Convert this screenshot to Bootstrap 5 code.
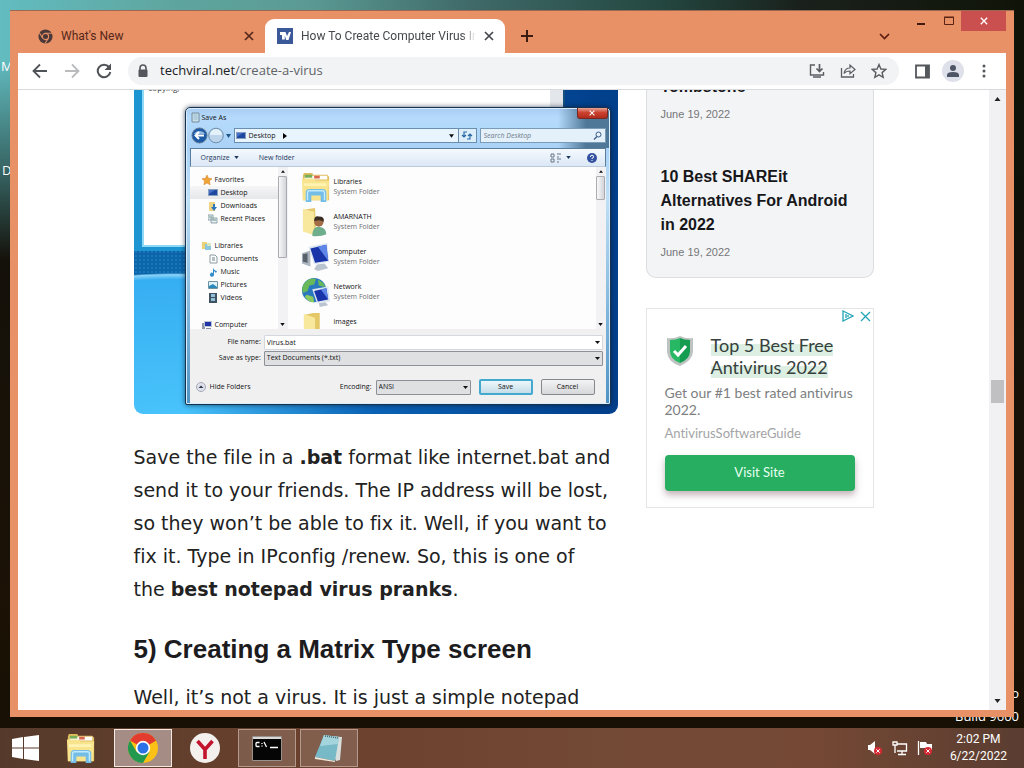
<!DOCTYPE html>
<html lang="en">
<head>
<meta charset="utf-8">
<meta name="viewport" content="width=device-width, initial-scale=1">
<title>How To Create Computer Virus</title>
<link href="https://cdn.jsdelivr.net/npm/bootstrap@5.3.0/dist/css/bootstrap.min.css" rel="stylesheet">
<style>
  body { height: 100vh; font-family: "Open Sans", "Noto Sans", sans-serif; color: #222; overflow: hidden; font-variant-ligatures: none;
    background: linear-gradient(180deg, transparent 0, transparent 60px, rgba(12,14,8,.55) 180px, #14110a 260px, #1c1206 600px, #150f02 100%),
      linear-gradient(90deg, #62bcc0 0, #5fa6a0 16%, #5b9a94 30%, #3f6a69 46%, #23463f 65%, #1a211c 78%, #101408 100%); }
  svg { display: block; flex: none; }
  button { font: inherit; color: inherit; background: none; border: 0; padding: 0; }
  .desk { min-height: 0; padding: 10px 10px 11px; }
  .desk-label { position: absolute; color: #fff; font-size: 13px; line-height: 18px; }
  .lbl-a { left: 1px; top: 57px; } .lbl-b { left: 2px; top: 161px; }
  .lbl-c { right: 5px; bottom: 0; line-height: 23px; }
  .win { position: relative; min-width: 0; background: #e89066; padding: 0 8px 7px; border-top: 1px solid #9c6851; }

  .titlebar { height: 42px; flex: none; font-size: 12px; }
  .tabs { padding-top: 8px; }
  .tab { height: 34px; padding: 0 11px 0 12px; font-family: Roboto, sans-serif; font-size: 12px; color: #54281a; }
  .tab-idle { width: 247px; padding-left: 20px; }
  .tab-on { width: 240px; background: #fff; border-radius: 9px 9px 0 0; color: #45474c; position: relative; }
  .tab-text { white-space: nowrap; overflow: hidden; }
  .tab-on .tab-text { -webkit-mask-image: linear-gradient(90deg, #000 92%, transparent); mask-image: linear-gradient(90deg, #000 92%, transparent); }
  .plus { padding: 15px 0 0 16px; }
  .winbtn { width: 27px; height: 20px; }
  .winclose { width: 45px; height: 20px; background: #c9504f; }
  .chev { padding: 20px 13px 0 0; }

  .toolbar { height: 37px; flex: none; background: #fff; padding: 0 14px; border-bottom: 1px solid #d9dadd; gap: 12px; }
  .omni { height: 28px; background: #f1f3f4; border-radius: 14px; padding: 0 8px 0 9px; gap: 11px; }
  .url { font-size: 13px; color: #5f6368; }
  .url b { font-weight: 400; color: #202124; }
  .avatar { width: 22px; height: 22px; background: #dfe1ea; border-radius: 50%; }

  .view { min-height: 0; background: #fff; overflow: hidden; }
  .vbar { width: 17px; background: #f1f1f3; padding: 7px 0; }
  .vbar i { width: 13px; height: 23px; background: #c0c0c2; margin-top: 279px; }
  .page { max-width: 740px; gap: 28px; }
  .article { min-width: 0; }
  .article p { font: 19px/33px Verdana, "DejaVu Sans", sans-serif; font-variant-ligatures: none; margin: 0 0 25px; color: #222; }
  .article h2 { font: bold 26px/36px "Liberation Sans", Arial, sans-serif; margin: 0 0 14px; color: #1c1c1e; }
  .side { width: 228px; flex: none; }
  .posts { display: flow-root; height: 188px; background: #f3f4f6; border: 1px solid #dcdde0; border-top: 0; border-radius: 0 0 10px 10px; padding: 0 14px; font-family: "Liberation Sans", Arial, sans-serif; }
  .posts h3 { font-size: 16px; line-height: 24px; font-weight: 700; color: #17171a; margin: 0; }
  .posts time { display: block; font-size: 11px; line-height: 16px; color: #757678; margin-top: 7px; }
  .posts .cutoff { margin-top: -15px; }
  .posts .nextpost { margin-top: 43px; }

  .adbox { margin-top: 30px; height: 200px; border: 1px solid #e6e6e8; padding: 25px 18px 0; position: relative; font-family: Lato, sans-serif; }
  .adtop { position: absolute; right: 2px; top: 1px; gap: 5px; }
  .adbox h4 { font-size: 18px; line-height: 22px; color: #36403c; margin: 0; font-weight: 400; }
  .adbox h4 span { background: linear-gradient(transparent 45%, #dcefe2 45%); }
  .adbox p { font-size: 14px; line-height: 17px; color: #7c7e80; margin: 6px 0 7px; }
  .adbox small { font-size: 13px; line-height: 16px; color: #a3a4a6; display: block; }
  .visit { display: block; margin-top: 14px; height: 36px; line-height: 35px; background: #27ae60; color: #e6fff0; border-radius: 4px; text-align: center; font-size: 13px; text-decoration: none; box-shadow: 0 4px 7px #8f6f7a88; }

  /* the screenshot that illustrates the article */
  .shot { position: relative; height: 324px; border-radius: 0 0 9px 9px; overflow: hidden; padding: 17px 7px 9px 51px; margin-bottom: 27px;
    background: linear-gradient(90deg, transparent 50px, #0a62b5 240px, #02408c 460px),
      radial-gradient(ellipse 300px 160px at 40px 343px, #4cc6fc 0, #36aef2 96%, #8bd4f8 99%, transparent 100%),
      radial-gradient(circle, #3aa6d8 0, transparent 1px) 0 0 / 4px 4px,
      linear-gradient(180deg, #1b8fce 0, #1a86c8 120px, #0d62a8 140px, #0a70b4 100%); }
  .note { position: absolute; left: 0; top: 0; width: 431px; height: 161px; background: linear-gradient(90deg, #fff 408px, #e3e6ea 408px); border: solid #1c95d2; border-width: 0 2px 4px 8px; border-right-color: #16507e; box-shadow: inset 2px -2px #8edaf6; font-size: 8px; line-height: 8px; padding-left: 7px; overflow: hidden; }
  .note span { display: block; margin-top: -6px; color: #333; }
  .dlg { position: relative; height: 298px; border: 1px solid #16324e; border-radius: 5px 5px 2px 2px; padding: 0 4px 4px; font-size: 7px; line-height: 10px; color: #111;
    background: linear-gradient(90deg, transparent 372px, #4f7898 400px) 0 0 / 100% 40px no-repeat, linear-gradient(180deg, #a9cdf2 0, #b5dafc 10px, #aad2f6 40px, #bfe0f6 90px, #4f93c4 100%); box-shadow: 0 0 5px #0a1a2eb0, inset 0 0 0 1px #d8eeff; }
  .dlg-top { height: 19px; padding: 0 0 0 1px; gap: 2px; }
  .dlg-x { width: 31px; height: 11px; background: linear-gradient(#e8a596, #cb4330 45%, #b12b1c); border: 1px solid #742a22; border-top: 0; border-radius: 0 0 3px 3px; margin: 0 -2px 8px 0; }
  .dlg-nav { height: 21px; padding: 0 0 4px 1px; gap: 2px; }
  .dlg-addr { height: 15px; background: #e9f5fe; border: 1px solid #6b8eae; padding: 0 4px 0 1px; gap: 3px; }
  .refresh { width: 18px; height: 15px; background: #ddeefb; border: 1px solid #6b8eae; border-left: 0; margin-left: -2px; }
  .dlg-search { width: 126px; height: 15px; background: #e4f0fa; border: 1px solid #7a9cb8; padding: 0 3px; margin-left: 1px; }
  .dlg-search input { border: 0; background: none; font-size: 7px; font-style: italic; width: 100px; padding: 0; line-height: 10px; }
  .dlg-search input::placeholder { color: #6c7a88; }
  .dlg-tools { height: 19px; background: linear-gradient(#f4f9fe, #dce8f6); border: 1px solid #5c7c9c; border-bottom-color: #bccbdc; padding: 0 8px 0 10px; color: #1e395b; }
  .dlg-body { height: 162px; background: #fdfdfe; overflow: hidden; }
  .tree { width: 88px; padding: 6px 0 0; }
  .tree li { height: 13px; padding-left: 12px; gap: 3px; white-space: nowrap; }
  .tree li.sub { padding-left: 18px; }
  .tree li.now { background: linear-gradient(#f6f6f7, #e6e7ea); }
  .tree li.apart { margin-top: 14px; }
  .bar { width: 10px; background: #f2f2f4; padding: 3px 0; }
  .thumb { width: 9px; border: 1px solid #a9abb0; border-radius: 1px; background: linear-gradient(90deg, #f8f8f9, #d2d4d8); margin: 3px 0 auto; }
  .thumb-l { height: 82px; } .thumb-r { height: 24px; }
  .items { padding: 5px 0 0 13px; }
  .items li { height: 35px; gap: 3px; }
  .items span { display: block; padding-top: 5px; }
  .items em { font-style: normal; display: block; color: #6d6d70; }
  .dlg-foot { height: 74px; background: #f0f0f1; padding: 5px 3px 0 6px; }
  .frow { height: 16px; gap: 3px; }
  .frow label { width: 79px; text-align: right; }
  .fbtn { margin-top: 13px; height: 16px; }
  .dlg .ctl { font-size: 7px; line-height: 10px; height: 15px; min-height: 0; border: 1px solid #8d9096; border-radius: 1px; padding: 0 10px 0 2px; color: #111; box-shadow: none;
    background: #fff url("data:image/svg+xml,%3Csvg xmlns='http://www.w3.org/2000/svg' width='5' height='3'%3E%3Cpath d='M0 0h5L2.5 3z' fill='%23111'/%3E%3C/svg%3E") no-repeat right 2px center / 5px 3px; }
  .dlg .ctl.grey { background-color: #dfe0e2; }
  .dlg .ctl.white { border-color: #d4d8de; }
  .dlg .enc { width: 95px; }
  .push { width: 54px; height: 16px; border: 1px solid #85888c; border-radius: 2px; background: linear-gradient(#f4f4f5, #d6d7da); text-align: center; }
  .push-on { border: 2px solid #44a9cf; background: linear-gradient(#edf7fb, #c5dde8); margin: 0 8px; }

  .taskbar { height: 40px; flex: none; background: linear-gradient(90deg, #553a2b 0, #6b412d 30%, #734a36 60%, #744834 80%, #5a3d31 100%); color: #fff; padding-right: 17px; }
  .task { width: 58px; height: 38px; border: 1px solid transparent; margin-right: 4px; }
  .task-start { width: 50px; height: 38px; margin-right: 2px; }
  .task.open { background: #ffffff26; border-color: #b49a8e; }
  .task.active { background: #a58c84; border-color: #f4e8e2; }
  .tray { gap: 9px; }
  .clock { font: 12px/17px Roboto, sans-serif; margin-left: 8px; text-align: center; }
</style>
</head>
<body class="d-flex flex-column">
<svg width="0" height="0" class="position-absolute">
  <symbol id="x" viewBox="0 0 10 10"><path d="M1 1l8 8M9 1L1 9" stroke="currentColor" stroke-width="1.7"/></symbol>
  <symbol id="dn" viewBox="0 0 6 4"><path d="M0 0h6L3 4z" fill="currentColor"/></symbol>
  <symbol id="up" viewBox="0 0 6 4"><path d="M0 4h6L3 0z" fill="currentColor"/></symbol>
  <symbol id="folders" viewBox="0 0 32 32"><path d="M2 4l1-3h9l1 2h15l2 2v25H2z" fill="#e2bd5c"/><path d="M4 4h24v4H4z" fill="#fff"/><path d="M4 3h8v3H4z" fill="#79ae58"/><path d="M14 4h6v3h-6z" fill="#d9664c"/><path d="M1 7h12l2 2h15l-1 21H2z" fill="#f9e48e"/><path d="M3 12h24v3H3z" fill="#fff3b4"/><path d="M5 32V22q0-4 4-4h14q4 0 4 4v10h-6v-7H11v7z" fill="#74bde6"/><path d="M7 30v-8q0-2 2-2h14q2 0 2 2v8" fill="none" stroke="#c1ebfc" stroke-width="1.5"/></symbol>
  <symbol id="user" viewBox="0 0 32 32"><path d="M3 3l12-2 1 28-12-3z" fill="#e4c867"/><path d="M2 2l12 3v25L2 26z" fill="#f8e89e"/><circle cx="19" cy="16" r="5" fill="#a36e47"/><path d="M14 15q0-6 5-5 7 0 5 6-2-3-10-1z" fill="#3b2c22"/><path d="M12 31q0-10 7-10 8 1 8 8-6 3-15 2z" fill="#6eae8d"/></symbol>
  <symbol id="pc" viewBox="0 0 32 32"><path d="M1 12l9-3v17l-9-3z" fill="#abb5c0"/><path d="M2 13l5-1v10l-5-1z" fill="#59616d"/><path d="M8 5l20-4 2 20-16 3z" fill="#dce6f2"/><path d="M10 7l17-4 2 17-14 2z" fill="#1834a8"/><path d="M18 5l9-2 2 17z" fill="#5e86e8"/><path d="M17 24l8-1 4 5-11 3-4-2z" fill="#bac4cf"/></symbol>
  <symbol id="net" viewBox="0 0 32 32"><circle cx="14" cy="14" r="13" fill="#2a79bf"/><path d="M4 6q6-6 12-4l-2 6-5 1-2 6-5 2q-2-6 2-11zM18 3q6 2 8 8l-7-2z" fill="#69b85a"/><path d="M6 19l7 2 1 6q-6 0-10-6z" fill="#8aca5e"/><path d="M12 13l17-3 2 16-14 2z" fill="#dce6f2"/><path d="M14 15l13-3 2 12-11 2z" fill="#1834a8"/><path d="M21 13l6-1 2 12z" fill="#5e86e8"/><path d="M19 28l7-1 3 3-9 2z" fill="#bac4cf"/></symbol>
  <symbol id="fold" viewBox="0 0 32 32"><path d="M4 3l9-2h7v30H4z" fill="#e4c867"/><path d="M3 2l12 4v25H3z" fill="#f8e89e"/></symbol>
  <symbol id="mon" viewBox="0 0 10 10"><path d="M0 1h10v7H0z" fill="#8a9fc0"/><path d="M1 2h8v5H1z" fill="#1e48a0"/><path d="M1 2h6L1 6z" fill="#446fc4"/></symbol>
  <symbol id="help" viewBox="0 0 10 10"><circle cx="5" cy="5" r="5" fill="#3450a0"/><path d="M3.400 4Q3.400 2.200 5 2.200T6.600 3.800Q6.600 5 5 5.300V6M5 7v1" stroke="#fff" fill="none"/></symbol>
</svg>

<div class="desk flex-grow-1 d-flex position-relative">
  <span class="desk-label lbl-a">M</span><span class="desk-label lbl-b">D</span>
  <span class="desk-label lbl-c text-end">Windows 8.1 Pro<br>Build 9600</span>

  <section class="win flex-grow-1 d-flex flex-column">
    <header class="titlebar d-flex align-items-start">
      <div class="tabs d-flex">
        <div class="tab tab-idle d-flex align-items-center">
          <svg width="15" height="15" viewBox="0 0 16 16"><circle cx="8" cy="8" r="7.500" fill="#4a3938"/><circle cx="8" cy="8" r="3.300" fill="#4a3938" stroke="#e89066" stroke-width="1.200"/><path d="M8 4.500h7M5 9.800L1.500 3.900M11 9.800L7.500 15.500" stroke="#e89066" stroke-width="1.100"/></svg>
          <span class="tab-text flex-grow-1 ps-2">What's New</span>
          <button aria-label="Close tab"><svg width="10" height="10"><use href="#x"/></svg></button>
        </div>
        <div class="tab tab-on d-flex align-items-center">
          <svg width="16" height="16" viewBox="0 0 16 16"><path d="M0 0h16v16H0z" fill="#3b5998"/><path d="M3 4h5.500l1.500 4L12 4h2l-2.500 8H9.200L7.800 7.500v4H5V7H3z" fill="#fff"/></svg>
          <span class="tab-text flex-grow-1 ps-2 me-2">How To Create Computer Virus In</span>
          <button aria-label="Close tab"><svg width="10" height="10"><use href="#x"/></svg></button>
        </div>
      </div>
      <button class="plus" aria-label="New tab"><svg width="12" height="20" viewBox="0 0 12 20"><path d="M6 4v12M0 10h12" stroke="#3a1d10" stroke-width="2"/></svg></button>
      <button class="chev ms-auto" aria-label="Search tabs"><svg width="11" height="10" viewBox="0 0 11 10"><path d="M1 3l4.500 4.500L10 3" fill="none" stroke="#5a1f10" stroke-width="1.700"/></svg></button>
      <button class="winbtn ms-1" aria-label="Minimize"><svg width="27" height="20"><path d="M10 13h8" stroke="#451a0e" stroke-width="2"/></svg></button>
      <button class="winbtn" aria-label="Maximize"><svg width="27" height="20"><path d="M10.500 6.500h9v7h-9zM10 6h10" fill="none" stroke="#5a2213"/></svg></button>
      <button class="winclose d-flex align-items-center justify-content-center text-white" aria-label="Close"><svg width="8" height="8"><use href="#x"/></svg></button>
    </header>

    <nav class="toolbar d-flex align-items-center">
      <button aria-label="Back"><svg width="16" height="16" viewBox="0 0 16 16"><path d="M15 8H2M8 1.500L1.500 8 8 14.500" fill="none" stroke="#505357" stroke-width="1.800"/></svg></button>
      <button class="ms-1" aria-label="Forward"><svg width="16" height="16" viewBox="0 0 16 16"><path d="M1 8h13M8 1.500L14.500 8 8 14.500" fill="none" stroke="#b9bbbd" stroke-width="1.800"/></svg></button>
      <button class="ms-1" aria-label="Reload"><svg width="16" height="16" viewBox="0 0 16 16"><path d="M13 4A6.300 6.300 0 1 0 14.300 9" fill="none" stroke="#505357" stroke-width="2"/><path d="M15 .5V7H8.500z" fill="#505357"/></svg></button>
      <div class="omni flex-grow-1 d-flex align-items-center ms-1 me-1">
        <svg width="12" height="14" viewBox="0 0 12 14"><path d="M3 6V4a3 3 0 0 1 6 0v2" fill="none" stroke="#54575b" stroke-width="1.600"/><rect x="1.500" y="5.500" width="9" height="7.500" rx="1" fill="#54575b"/></svg>
        <span class="url flex-grow-1"><b>techviral.net</b>/create-a-virus</span>
        <button aria-label="Install"><svg width="16" height="16" viewBox="0 0 16 16"><path d="M6 2H1.500v10h13V9" fill="none" stroke="#5a5d61" stroke-width="1.400"/><path d="M10.500 1v7M7.500 5.500l3 3 3-3M4 14h8" fill="none" stroke="#5a5d61" stroke-width="1.700"/></svg></button>
        <button class="ms-1" aria-label="Share"><svg width="16" height="16" viewBox="0 0 16 16"><path d="M1.500 5v9h12v-3" fill="none" stroke="#5a5d61" stroke-width="1.300"/><path d="M4 10.500Q5 5 10 5V2l5 4.500-5 4.300V8Q6 8 4 10.500z" fill="none" stroke="#5a5d61" stroke-width="1.200"/></svg></button>
        <button class="ms-1 me-1" aria-label="Bookmark"><svg width="16" height="16" viewBox="0 0 16 16"><path d="M8 1.500l1.900 4.500 4.900.4-3.700 3.200 1.100 4.800L8 11.900l-4.200 2.500 1.100-4.800L1.200 6.400 6.100 6z" fill="none" stroke="#5a5d61" stroke-width="1.400"/></svg></button>
      </div>
      <button aria-label="Side panel"><svg width="15" height="15" viewBox="0 0 15 15"><path d="M1 1.500h13v12H1z" fill="none" stroke="#54575b" stroke-width="1.800"/><path d="M10 1h4v13h-4z" fill="#54575b"/></svg></button>
      <button class="avatar d-flex align-items-center justify-content-center" aria-label="Profile"><svg width="14" height="14" viewBox="0 0 14 14"><circle cx="7" cy="4" r="3" fill="#4e5565"/><path d="M1 13v-2q0-3 6-3t6 3v2z" fill="#4e5565"/></svg></button>
      <button aria-label="Menu"><svg width="16" height="16" viewBox="0 0 16 16" fill="#54575b"><circle cx="8" cy="3" r="1.500"/><circle cx="8" cy="8" r="1.500"/><circle cx="8" cy="13" r="1.500"/></svg></button>
    </nav>

    <div class="view flex-grow-1 d-flex">
      <div class="flex-grow-1 d-flex justify-content-center overflow-hidden">
        <main class="page flex-grow-1 d-flex">
          <article class="article flex-grow-1">
            <div class="shot">
              <div class="note"><span>copying,</span></div>
              <div class="dlg">
                <div class="dlg-top d-flex align-items-center">
                  <svg width="9" height="11" viewBox="0 0 9 11"><path d="M1 1h7v9H1z" fill="#c8e1ed" stroke="#72899b"/><path d="M2.500 3h4M2.500 5h4M2.500 7h4" stroke="#7e9fb2" stroke-width=".6"/></svg>
                  <span class="flex-grow-1">Save As</span>
                  <button class="dlg-x d-flex align-items-center justify-content-center text-white" aria-label="Close"><svg width="6" height="6"><use href="#x"/></svg></button>
                </div>
                <div class="dlg-nav d-flex align-items-center">
                  <svg width="41" height="17" viewBox="0 0 41 17"><circle cx="8.500" cy="8.500" r="7.500" fill="#1e5ba7" stroke="#5f7995"/><path d="M3 7a6 5 0 0 1 11 0z" fill="#91b7df"/><path d="M4 8.500h9M8 5L4.500 8.500 8 12" stroke="#fff" stroke-width="2" fill="none"/><circle cx="25" cy="8.500" r="7.300" fill="#bdd5ea" stroke="#6d8caa"/><path d="M19 8a6 6 0 0 1 12 0z" fill="#e3f1fb"/><path d="M35 7h5l-2.500 4z" fill="#1d5689"/></svg>
                  <div class="dlg-addr flex-grow-1 d-flex align-items-center"><svg width="10" height="10"><use href="#mon"/></svg><span>Desktop</span><svg class="ms-1" width="4" height="6" viewBox="0 0 4 6"><path d="M0 0v6l4-3z"/></svg><svg class="ms-auto" width="5" height="4"><use href="#dn"/></svg></div>
                  <button class="refresh" aria-label="Refresh"><svg width="16" height="13" viewBox="0 0 16 13"><path d="M8 3H5v5M3 6l2 2 2-2M8 10h3V5M9 7l2-2 2 2" fill="none" stroke="#2c68a6" stroke-width="1.200"/></svg></button>
                  <div class="dlg-search d-flex align-items-center justify-content-between"><input type="search" placeholder="Search Desktop" aria-label="Search Desktop"><svg width="9" height="9" viewBox="0 0 9 9"><circle cx="5.500" cy="3.500" r="2.500" fill="none" stroke="#3d5c82"/><path d="M4 5.500L1 8.500" stroke="#3d5c82" stroke-width="1.300"/></svg></div>
                </div>
                <div class="dlg-tools d-flex align-items-center">
                  <button class="d-flex align-items-center gap-1">Organize <svg width="5" height="3"><use href="#dn"/></svg></button>
                  <button class="ms-3 ps-1">New folder</button>
                  <svg class="ms-auto" width="12" height="10" viewBox="0 0 12 10"><path d="M1 1h3v3H1zM1 6h3v3H1zM7 1h4M7 4h2M7 6h4M7 9h2" fill="none" stroke="#6b7889"/></svg>
                  <svg class="ms-1" width="5" height="3"><use href="#dn"/></svg>
                  <svg class="ms-3" width="10" height="10"><use href="#help"/></svg>
                </div>
                <div class="dlg-body d-flex">
                  <ul class="tree list-unstyled m-0">
                    <li class="d-flex align-items-center"><svg width="10" height="10" viewBox="0 0 10 10"><path d="M5 0l1.500 3.300 3.500.4-2.600 2.400.7 3.700L5 8 1.900 9.800l.7-3.700L0 3.700l3.500-.4z" fill="#f0a336" stroke="#d07c1c" stroke-width=".5"/></svg>Favorites</li>
                    <li class="sub now d-flex align-items-center"><svg width="10" height="10"><use href="#mon"/></svg>Desktop</li>
                    <li class="sub d-flex align-items-center"><svg width="10" height="10" viewBox="0 0 10 10"><path d="M1 1h6v9H1z" fill="#efd582"/><path d="M7 3v3h2L6 10 3 6h2V3z" fill="#2e76be"/></svg>Downloads</li>
                    <li class="sub d-flex align-items-center"><svg width="10" height="10" viewBox="0 0 10 10"><path d="M0 1h5v5H0zM3 4h6v5H3z" fill="#e5edf2" stroke="#8fa4ac"/><path d="M1 3h3M5 6h3" stroke="#749a80"/></svg>Recent Places</li>
                    <li class="apart d-flex align-items-center"><svg width="10" height="10" viewBox="0 0 10 10"><path d="M0 1h5v7H0z" fill="#edd177"/><path d="M3 3h6v6H3z" fill="#8ac6dc"/><path d="M5 2h4v3H5z" fill="#d9e7bd"/></svg>Libraries</li>
                    <li class="sub d-flex align-items-center"><svg width="10" height="10" viewBox="0 0 10 10"><path d="M2 1h5l2 2v6H2z" fill="#fff" stroke="#899a9e"/><path d="M4 4h3M4 6h3" stroke="#67808d"/></svg>Documents</li>
                    <li class="sub d-flex align-items-center"><svg width="10" height="10" viewBox="0 0 10 10"><path d="M5 0q0 3 4 4L8 6 6 4v4a2 2 0 1 1-1-2z" fill="#318dcc"/></svg>Music</li>
                    <li class="sub d-flex align-items-center"><svg width="10" height="10" viewBox="0 0 10 10"><path d="M.5 1.500h9v7h-9z" fill="#ddf1fa" stroke="#70919e"/><path d="M1 6l4-2 4 3v1H1z" fill="#278abb"/></svg>Pictures</li>
                    <li class="sub d-flex align-items-center"><svg width="10" height="10" viewBox="0 0 10 10"><path d="M1 0h8v10H1z" fill="#3e5262"/><path d="M3 1h4v3H3zM3 5h4v3H3z" fill="#91c0d8"/></svg>Videos</li>
                    <li class="apart d-flex align-items-center"><svg width="10" height="10" viewBox="0 0 10 10"><path d="M0 3h3v6H0z" fill="#8d98a8"/><path d="M2 1h8v6H2z" fill="#bac7d8"/><path d="M3 2h6v4H3z" fill="#2234a5"/><path d="M4 8h5v1H4z" fill="#8993a0"/></svg>Computer</li>
                  </ul>
                  <div class="bar d-flex flex-column align-items-center"><svg width="4" height="3"><use href="#up"/></svg><i class="thumb thumb-l"></i><svg width="5" height="3"><use href="#dn"/></svg></div>
                  <ul class="items list-unstyled flex-grow-1 m-0">
                    <li class="d-flex"><svg width="30" height="30"><use href="#folders"/></svg><span>Libraries<em>System Folder</em></span></li>
                    <li class="d-flex"><svg width="30" height="30"><use href="#user"/></svg><span>AMARNATH<em>System Folder</em></span></li>
                    <li class="d-flex"><svg width="30" height="30"><use href="#pc"/></svg><span>Computer<em>System Folder</em></span></li>
                    <li class="d-flex"><svg width="30" height="30"><use href="#net"/></svg><span>Network<em>System Folder</em></span></li>
                    <li class="d-flex"><svg width="30" height="30"><use href="#fold"/></svg><span>images</span></li>
                  </ul>
                  <div class="bar d-flex flex-column align-items-center"><svg width="4" height="3"><use href="#up"/></svg><i class="thumb thumb-r"></i><svg width="5" height="3"><use href="#dn"/></svg></div>
                </div>
                <div class="dlg-foot">
                  <div class="frow d-flex align-items-center"><label for="fn">File name:</label><input id="fn" class="ctl white form-control flex-grow-1" value="Virus.bat"></div>
                  <div class="frow d-flex align-items-center"><label for="ft">Save as type:</label><select id="ft" class="ctl grey form-select flex-grow-1"><option>Text Documents (*.txt)</option></select></div>
                  <div class="fbtn d-flex align-items-center">
                    <button class="d-flex align-items-center gap-1"><svg width="10" height="10" viewBox="0 0 10 10"><circle cx="5" cy="5" r="4.500" fill="#dfe2ea" stroke="#a5a9b5"/><path d="M2.500 6h5L5 3.500z" fill="#333a50"/></svg>Hide Folders</button>
                    <label class="ms-auto me-1" for="en">Encoding:</label><select id="en" class="ctl grey enc form-select"><option>ANSI</option></select>
                    <button class="push push-on">Save</button><button class="push me-2">Cancel</button>
                  </div>
                </div>
              </div>
            </div>
            <p>Save the file in a <strong>.bat</strong> format like internet.bat and send it to your friends. The IP address will be lost, so they won’t be able to fix it. Well, if you want to fix it. Type in IPconfig /renew. So, this is one of<br>the <strong>best notepad virus pranks</strong>.</p>
            <h2>5) Creating a Matrix Type screen</h2>
            <p>Well, it’s not a virus. It is just a simple notepad</p>
          </article>

          <aside class="side">
            <div class="posts">
              <h3 class="cutoff">Tombstone</h3>
              <time>June 19, 2022</time>
              <h3 class="nextpost">10 Best SHAREit Alternatives For Android in 2022</h3>
              <time>June 19, 2022</time>
            </div>
            <div class="adbox">
              <div class="adtop d-flex"><svg width="12" height="12" viewBox="0 0 12 12"><path d="M1 1l10 5-10 5zM4 4v4M6 5v2" fill="none" stroke="#22a5b5" stroke-width="1.300"/></svg><button aria-label="Close ad"><svg width="12" height="12" viewBox="0 0 12 12"><path d="M2 2l9 9M11 2l-9 9" stroke="#22a5b5" stroke-width="1.300"/></svg></button></div>
              <div class="d-flex">
                <svg class="me-3" width="30" height="34" viewBox="0 0 30 34"><path d="M2 4q7 1 13-2 6 3 13 2v14q-1 9-13 14Q3 28 2 18z" fill="#bcc3c1"/><path d="M5 6q6 0 10-2v25Q5 25 5 17z" fill="#27b864"/><path d="M15 4q4 2 10 2v11q0 8-10 12z" fill="#149c50"/><path d="M9 17l4 4 8-9" fill="none" stroke="#fff" stroke-width="3"/></svg>
                <h4><span>Top 5 Best Free<br>Antivirus 2022</span></h4>
              </div>
              <p>Get our #1 best rated antivirus 2022.</p>
              <small>AntivirusSoftwareGuide</small>
              <a class="visit" href="#">Visit Site</a>
            </div>
          </aside>
        </main>
      </div>
      <div class="vbar d-flex flex-column align-items-center"><svg width="7" height="4"><use href="#up"/></svg><i></i><svg class="mt-auto" width="7" height="4"><use href="#dn"/></svg></div>
    </div>
  </section>
</div>

<footer class="taskbar d-flex align-items-center">
  <button class="task-start d-flex align-items-center justify-content-center" aria-label="Start"><svg width="27" height="26" viewBox="0 0 27 26" fill="#fff"><path d="M0 4l11-2v10.500H0zM12 2l15-2v12.500H12zM0 13.500h11V24L0 22zM12 13.500h15V26l-15-2z"/></svg></button>
  <button class="task d-flex align-items-center justify-content-center" aria-label="File Explorer"><svg width="32" height="30"><use href="#folders" width="32" height="30"/></svg></button>
  <button class="task active d-flex align-items-center justify-content-center" aria-label="Chrome"><svg width="30" height="30" viewBox="0 0 30 30"><circle cx="15" cy="15" r="15" fill="#fbc116"/><path d="M15 15L2 7.500A15 15 0 0 1 28 7.500z" fill="#e33b2e"/><path d="M15 7.500h13L15 15z" fill="#e33b2e"/><path d="M2 7.500A15 15 0 0 0 15 30l6.500-11.200L8.500 18.800z" fill="#22994f"/><circle cx="15" cy="15" r="7.200" fill="#fff"/><circle cx="15" cy="15" r="5.500" fill="#2a72e5"/></svg></button>
  <button class="task d-flex align-items-center justify-content-center" aria-label="Yandex"><svg width="30" height="30" viewBox="0 0 30 30"><circle cx="15" cy="15" r="15" fill="#f3f0ee"/><path d="M7.500 8l7.500 8.500L22.500 8M15 16v10" fill="none" stroke="#c3142e" stroke-width="3.600"/></svg></button>
  <button class="task open d-flex align-items-center justify-content-center" aria-label="Command Prompt"><svg width="30" height="25" viewBox="0 0 30 25"><path d="M.5.5h29v24H.5z" fill="#050505" stroke="#98918d"/><path d="M1 1h28v2H1z" fill="#d9d9d9"/><path d="M7.500 6.500H5q-1 0-1 1v2q0 1 1 1h2.500M10 7v1M10 9.500v1M12 6l2.500 5M18 11.500h8" fill="none" stroke="#fff" stroke-width="1.300"/></svg></button>
  <button class="task open d-flex align-items-center justify-content-center" aria-label="Notepad"><svg width="30" height="28" viewBox="0 0 30 28"><path d="M12 2l16 1-2 23-4 1z" fill="#d9dfdc"/><path d="M10 1l15 2-4 24L1 23z" fill="#77b9c6"/><path d="M10 1l15 2-1 7L6 12z" fill="#a5d5dc"/><path d="M1 23l20 4v1L1 25z" fill="#efe9dc"/><path d="M11 2l13 2" stroke="#4c6771" stroke-width="1.500" stroke-dasharray="1 1"/></svg></button>
  <div class="tray d-flex align-items-center ms-auto">
    <svg width="16" height="16" viewBox="0 0 16 16"><path d="M1 5h2l5-4v13L3 10H1z" fill="#fff"/><circle cx="11" cy="11" r="4" fill="#d62b34"/><path d="M9.300 9.300l3.400 3.400M12.700 9.300l-3.400 3.400" stroke="#fff"/></svg>
    <svg width="16" height="16" viewBox="0 0 16 16"><path d="M5 4h9.500v7H5M1 2h4v3H1zM3 5v8M10 11v3M6 14.500h8" fill="none" stroke="#fff" stroke-width="1.300"/></svg>
    <svg width="16" height="16" viewBox="0 0 16 16"><path d="M1.500 1v14" stroke="#fff" stroke-width="1.300"/><path d="M3 2h6l1 2h5v6H9L8 8H3z" fill="#fff"/><circle cx="11" cy="11" r="4" fill="#d62b34"/><path d="M9.300 9.300l3.400 3.400M12.700 9.300l-3.400 3.400" stroke="#fff"/></svg>
    <div class="clock">2:02 PM<br>6/22/2022</div>
  </div>
</footer>
<script src="https://cdn.jsdelivr.net/npm/bootstrap@5.3.0/dist/js/bootstrap.bundle.min.js"></script>
</body>
</html>
